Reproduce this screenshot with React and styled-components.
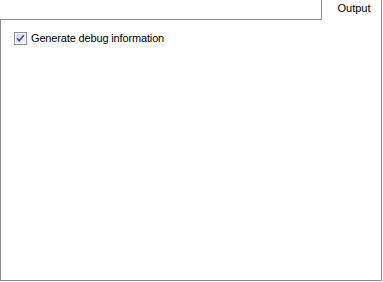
import React from "react";
import styled, { createGlobalStyle } from "styled-components";

const Global = createGlobalStyle`
  html, body { margin: 0; padding: 0; background: #ffffff; }
  body { font-family: Tahoma, "Liberation Sans", "DejaVu Sans", sans-serif; font-size: 11px; color: #000; }
`;

const Frame = styled.div`
  width: 382px;
  display: flex;
  flex-direction: column;
`;

const TabStrip = styled.div`
  display: flex;
  height: 20px;
`;

const Filler = styled.div`
  flex: 1;
  border-bottom: 1px solid #898c95;
  box-sizing: border-box;
`;

const Tab = styled.div`
  width: 61px;
  box-sizing: border-box;
  border-left: 1px solid #898c95;
  border-right: 1px solid #898c95;
  background: #fff;
  display: flex;
  justify-content: center;
  padding: 2px 0 0 5px;
  font-family: "Liberation Sans", sans-serif;
  font-size: 11px;
  line-height: 13px;
`;

const Panel = styled.div`
  height: 261px;
  box-sizing: border-box;
  border: 1px solid #898c95;
  border-top: none;
  padding: 12px 0 0 13px;
`;

const CheckRow = styled.label`
  display: flex;
  align-items: center;
  gap: 4px;
  font-family: "Liberation Sans", sans-serif;
  font-size: 11px;
  line-height: 13px;
  letter-spacing: -0.15px;
`;

const Box = styled.svg`
  display: block;
  flex: none;
`;

function CheckBox() {
  return (
    <Box width="13" height="13" viewBox="0 0 13 13">
      <defs>
        <linearGradient id="cbg" x1="0" y1="0" x2="1" y2="1">
          <stop offset="0" stopColor="#d2d4d8" />
          <stop offset="1" stopColor="#f4f4f5" />
        </linearGradient>
      </defs>
      <rect x="0.5" y="0.5" width="12" height="12" fill="#fff" stroke="#8e8f8f" />
      <rect x="2" y="2" width="9" height="9" fill="url(#cbg)" />
      <path d="M3.2 6.4 L5.3 8.8 L9.8 3.2" fill="none" stroke="#3b52a0" strokeWidth="1.7" strokeLinejoin="round" />
    </Box>
  );
}

export default function App() {
  return (
    <>
      <Global />
      <Frame>
        <TabStrip>
          <Filler />
          <Tab>Output</Tab>
        </TabStrip>
        <Panel>
          <CheckRow>
            <CheckBox />
            <span>Generate debug information</span>
          </CheckRow>
        </Panel>
      </Frame>
    </>
  );
}
